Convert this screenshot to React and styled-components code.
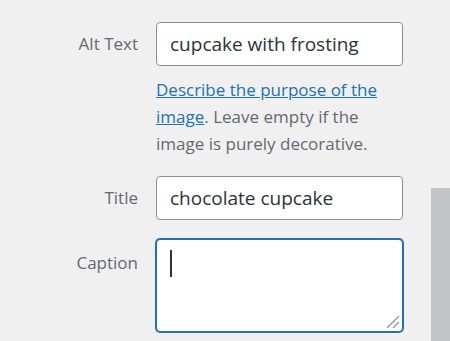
import styled, { createGlobalStyle } from "styled-components";

const GlobalStyle = createGlobalStyle`
  html, body {
    margin: 0;
    padding: 0;
    background: #f0f0f1;
  }
  body {
    font-family: "Open Sans", "Noto Sans", sans-serif;
  }
`;

const Page = styled.div`
  display: flex;
  width: 450px;
  height: 341px;
  overflow: hidden;
  background: #f0f0f1;
`;

const Form = styled.div`
  flex: 1;
  display: grid;
  grid-template-columns: 138px 247px;
  column-gap: 18px;
  align-content: start;
  padding-top: 22px;
`;

const Label = styled.label`
  text-align: right;
  font-size: 17px;
  color: #646970;
  line-height: 24px;
  padding-top: ${(p) => p.$top || 10}px;
`;

const Input = styled.div`
  box-sizing: border-box;
  height: 44px;
  border: 1px solid #8c8f94;
  border-radius: 4px;
  background: #fff;
  padding: 0 13px;
  font-size: 19px;
  line-height: 42px;
  color: #2c3338;
  white-space: nowrap;
`;

const Help = styled.p`
  grid-column: 2;
  margin: 10px 0 19px;
  font-size: 17px;
  line-height: 27px;
  color: #646970;
`;

const Link = styled.a`
  color: #2271b1;
  text-decoration: underline;
`;

const Spacer = styled.div`
  height: ${(p) => p.$h}px;
  grid-column: 1 / span 2;
`;

const TextArea = styled.div`
  box-sizing: border-box;
  height: 93px;
  margin-top: 1px;
  border: 1px solid #2271b1;
  box-shadow: 0 0 0 1px #2271b1;
  border-radius: 4px;
  background: #fff;
  display: flex;
  flex-direction: column;
  padding: 10px 2px 2px 13px;
`;

const Caret = styled.span`
  width: 2px;
  height: 27px;
  background: #2c3338;
`;

const Grip = styled.svg`
  margin-top: auto;
  align-self: flex-end;
`;

const Track = styled.div`
  width: 19px;
  display: flex;
  flex-direction: column;
`;

const Thumb = styled.div`
  margin-top: 188px;
  flex: 1;
  background: #c3c4c7;
`;

export default function App() {
  return (
    <>
      <GlobalStyle />
      <Page>
        <Form>
          <Label>Alt Text</Label>
          <Input>cupcake with frosting</Input>
          <Help>
            <Link href="#">Describe the purpose of the image</Link>. Leave
            empty if the image is purely decorative.
          </Help>
          <Label>Title</Label>
          <Input>chocolate cupcake</Input>
          <Spacer $h={18} />
          <Label $top={13}>Caption</Label>
          <TextArea>
            <Caret />
            <Grip width="14" height="14" viewBox="0 0 14 14">
              <path d="M1 13 L13 1 M7 13 L13 7" stroke="#8c8f94" strokeWidth="1.2" fill="none" />
            </Grip>
          </TextArea>
        </Form>
        <Track>
          <Thumb />
        </Track>
      </Page>
    </>
  );
}
